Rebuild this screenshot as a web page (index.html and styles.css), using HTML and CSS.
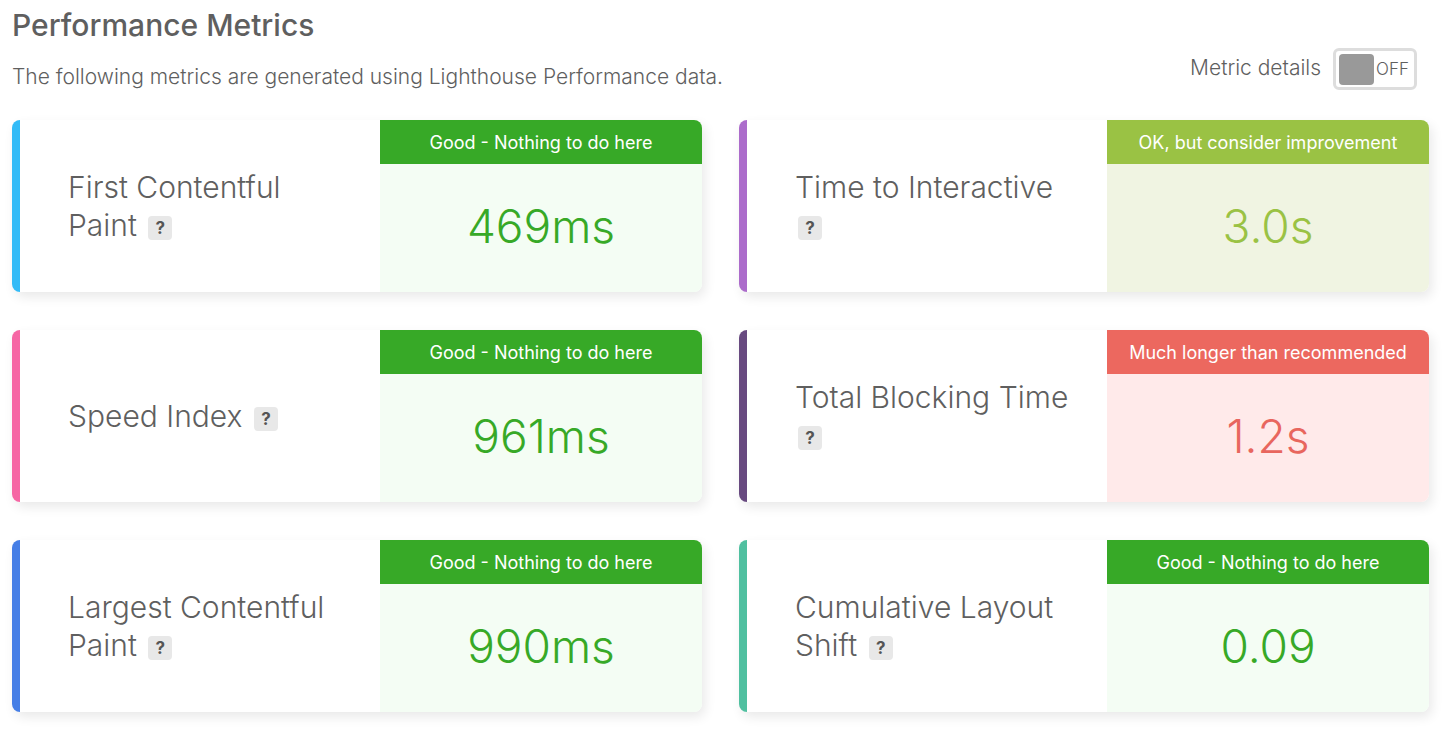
FILE: index.html
```
<!DOCTYPE html>
<html lang="en">
<head>
<meta charset="utf-8">
<title>Performance Metrics</title>
<link rel="stylesheet" href="styles.css">
</head>
<body>
<main class="page">
  <header class="intro">
    <div>
      <h1 class="title">Performance Metrics</h1>
      <p class="subtitle">The following metrics are generated using Lighthouse Performance data.</p>
    </div>
    <div class="details">
      <span class="details-label" id="details-label">Metric details</span>
      <button class="toggle" type="button" role="switch" aria-checked="false" aria-labelledby="details-label"><span class="knob"></span>OFF</button>
    </div>
  </header>
  <section class="grid">
    <article class="card sky good">
      <h2 class="name">First Contentful Paint <button class="help" type="button">?</button></h2>
      <div class="result"><p class="status">Good - Nothing to do here</p><p class="value">469ms</p></div>
    </article>
    <article class="card violet ok">
      <h2 class="name">Time to Interactive <button class="help" type="button">?</button></h2>
      <div class="result"><p class="status">OK, but consider improvement</p><p class="value">3.0s</p></div>
    </article>
    <article class="card pink good">
      <h2 class="name">Speed Index <button class="help" type="button">?</button></h2>
      <div class="result"><p class="status">Good - Nothing to do here</p><p class="value">961ms</p></div>
    </article>
    <article class="card plum bad">
      <h2 class="name">Total Blocking Time <button class="help" type="button">?</button></h2>
      <div class="result"><p class="status">Much longer than recommended</p><p class="value">1.2s</p></div>
    </article>
    <article class="card blue good">
      <h2 class="name">Largest Contentful Paint <button class="help" type="button">?</button></h2>
      <div class="result"><p class="status">Good - Nothing to do here</p><p class="value">990ms</p></div>
    </article>
    <article class="card teal good">
      <h2 class="name">Cumulative Layout Shift <button class="help" type="button">?</button></h2>
      <div class="result"><p class="status">Good - Nothing to do here</p><p class="value">0.09</p></div>
    </article>
  </section>
</main>
</body>
</html>
```
FILE: styles.css
```
* { box-sizing: border-box; }
body { margin: 0; background: #fff; color: #5f5f5f; font-family: Inter, "Open Sans", sans-serif; }
h1, h2, p { margin: 0; }
.page { padding: 6px 25px 30px 12px; }
.intro { display: flex; justify-content: space-between; align-items: flex-end; padding-right: 12px; margin-bottom: 30px; }
.title { font-size: 30px; line-height: 38px; font-weight: 500; }
.subtitle { margin-top: 20px; font-size: 21px; line-height: 26px; font-weight: 300; }
.details { display: flex; align-items: center; gap: 12px; }
.details-label { padding-bottom: 3px; font-size: 21px; line-height: 26px; font-weight: 300; }
.toggle { display: flex; align-items: center; gap: 2px; height: 42px; padding: 0 5px 0 3px; border: 3px solid #ddd; border-radius: 6px; background: #fff; color: #5f5f5f; font: 300 17px Inter, sans-serif; }
.knob { width: 35px; height: 31px; border-radius: 4px; background: #999; }
.grid { display: grid; grid-template-columns: 1fr 1fr; gap: 38px 37px; }
.card { display: grid; grid-template-columns: 360fr 322fr; min-height: 172px; border-left: 8px solid; border-radius: 8px; background: #fff; box-shadow: 3px 5px 12px rgba(0, 0, 0, 0.09); overflow: hidden; }
.name { align-self: center; padding: 0 24px 0 48px; color: #5f5f5f; font-size: 30px; line-height: 38px; font-weight: 300; }
.help { width: 24px; height: 24px; margin-left: 3px; padding: 0; border: 0; border-radius: 4px; background: #e8e8e8; color: #555; font: bold 17px Inter, sans-serif; vertical-align: 2px; }
.result { display: flex; flex-direction: column; }
.status { padding-top: 2px; color: #fff; font-size: 18px; line-height: 42px; text-align: center; }
.value { flex: 1; display: flex; align-items: center; justify-content: center; padding-bottom: 4px; font-size: 46px; font-weight: 300; }
.sky { border-left-color: #33bbf7; }
.violet { border-left-color: #ac6ccb; }
.pink { border-left-color: #f666a4; }
.plum { border-left-color: #684a80; }
.blue { border-left-color: #457ee6; }
.teal { border-left-color: #50c0a0; }
.good .status { background: #37a927; }
.good .value { background: #f4fdf4; color: #37a927; }
.ok .status { background: #9ac244; }
.ok .value { background: #f0f4e2; color: #9ac244; }
.bad .status { background: #ec685f; }
.bad .value { background: #ffeaea; color: #e8665e; }
```
